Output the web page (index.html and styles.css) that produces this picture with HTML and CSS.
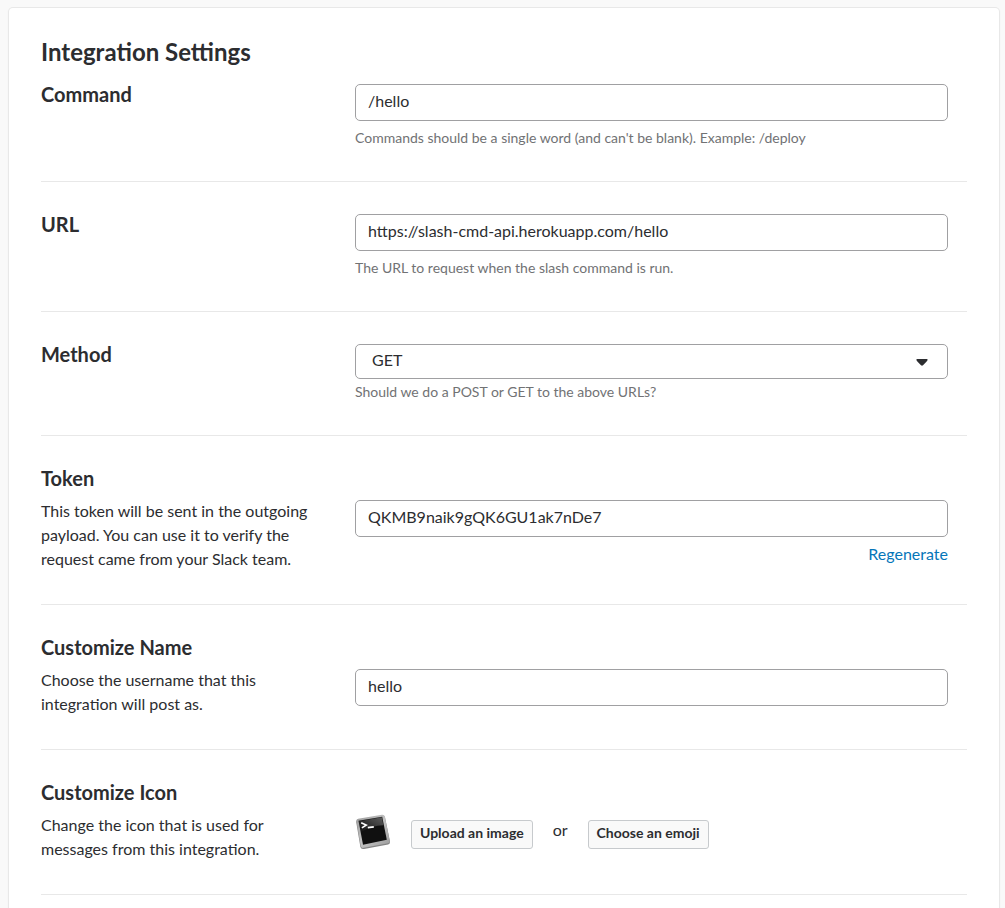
FILE: index.html
```html
<!DOCTYPE html>
<html lang="en">
<head>
<meta charset="utf-8">
<meta name="viewport" content="width=device-width, initial-scale=1">
<title>Integration Settings</title>
<link rel="stylesheet" href="styles.css">
</head>
<body>
<main class="card">
  <h1 class="card-title">Integration Settings</h1>
  <form class="settings">
    <section class="row">
      <div class="info"><h2 class="label"><label for="command">Command</label></h2></div>
      <div class="field">
        <input class="text-input" id="command" type="text" value="/hello">
        <p class="hint">Commands should be a single word (and can't be blank). Example: /deploy</p>
      </div>
    </section>
    <section class="row">
      <div class="info"><h2 class="label"><label for="url">URL</label></h2></div>
      <div class="field">
        <input class="text-input" id="url" type="text" value="https://slash-cmd-api.herokuapp.com/hello">
        <p class="hint">The URL to request when the slash command is run.</p>
      </div>
    </section>
    <section class="row">
      <div class="info"><h2 class="label"><label for="method">Method</label></h2></div>
      <div class="field">
        <div class="select-wrap">
          <select class="select" id="method">
            <option selected>GET</option>
            <option>POST</option>
          </select>
          <svg class="caret" viewBox="0 0 12 8" aria-hidden="true"><path d="M1.200 1h9.600q1 0 .8 1-.2.800-1.200 1.700L7 7.200q-1 .9-2 0L1.600 3.700Q.6 2.800.4 2 .2 1 1.200 1z"/></svg>
        </div>
        <p class="hint hint-close">Should we do a POST or GET to the above URLs?</p>
      </div>
    </section>
    <section class="row">
      <div class="info">
        <h2 class="label"><label for="token">Token</label></h2>
        <p class="description">This token will be sent in the outgoing payload. You can use it to verify the request came from your Slack team.</p>
      </div>
      <div class="field field-lowered">
        <input class="text-input" id="token" type="text" value="QKMB9naik9gQK6GU1ak7nDe7" readonly>
        <a class="regenerate" href="#token">Regenerate</a>
      </div>
    </section>
    <section class="row">
      <div class="info">
        <h2 class="label"><label for="name">Customize Name</label></h2>
        <p class="description">Choose the username that this integration will post as.</p>
      </div>
      <div class="field field-lowered">
        <input class="text-input" id="name" type="text" value="hello">
      </div>
    </section>
    <section class="row">
      <div class="info">
        <h2 class="label">Customize Icon</h2>
        <p class="description">Change the icon that is used for messages from this integration.</p>
      </div>
      <div class="field field-lowered">
        <div class="icon-picker">
          <svg class="app-icon" viewBox="0 0 36 36" role="img" aria-label="Terminal icon">
            <defs>
              <linearGradient id="frame" x1="0" y1="0" x2="1" y2="1">
                <stop offset="0" stop-color="#9a9a9a"/><stop offset=".5" stop-color="#c4c4c4"/><stop offset="1" stop-color="#9a9a9a"/>
              </linearGradient>
              <linearGradient id="glare" x1="0" y1="1" x2="1" y2="0">
                <stop offset="0" stop-color="#fff" stop-opacity="0"/><stop offset="1" stop-color="#fff" stop-opacity=".32"/>
              </linearGradient>
            </defs>
            <path d="M3 5.500 27 1.500q2.500-.4 3 1.800L35 27.500q.4 2.300-1.800 3L9 35q-3 .6-3.600-2L1.200 8q-.3-2 1.800-2.500z" fill="#858585"/>
            <path d="M3.200 4.800 27 .8q2.300-.3 2.800 1.700l4.900 24.200q.4 2-1.700 2.600L8.800 33.800q-2.500.5-3-1.600L1.500 7.200q-.3-2 1.700-2.400z" fill="url(#frame)"/>
            <path d="M3.500 6.800 27.200 2.800l4.600 23L8 30.800z" fill="#101010"/>
            <path d="M4 7.200 26.800 3.300l1.500 8Q17 11.500 6 18z" fill="url(#glare)"/>
            <path d="m6.200 8.800 5 2.300-4.300 2.800M12.800 13.700l6-.9" fill="none" stroke="#fff" stroke-width="1.700"/>
          </svg>
          <div class="icon-actions">
            <button class="button" type="button">Upload an image</button>
            <span class="or">or</span>
            <button class="button" type="button">Choose an emoji</button>
          </div>
        </div>
      </div>
    </section>
  </form>
</main>
</body>
</html>
```
FILE: styles.css
```css
* {
  box-sizing: border-box;
}

body {
  display: flex;
  flex-direction: column;
  min-height: 100vh;
  margin: 0;
  padding: 8px 6px 0 9px;
  background: #f9f9f9;
  color: #2c2d30;
  font-family: Lato, "Liberation Sans", sans-serif;
  font-size: 16px;
  line-height: 24px;
}

h1, h2, p {
  margin: 0;
}

.card {
  flex: 1;
  padding: 32px 32px 0;
  background: #fff;
  border-radius: 4px 4px 0 0;
  box-shadow: 0 0 0 1px #e8e8e8, 0 1px 3px rgba(0, 0, 0, 0.08);
}

.card-title {
  margin-bottom: 20px;
  font-size: 24px;
  line-height: 24px;
}

.row {
  display: grid;
  grid-template-columns: minmax(200px, 282px) 1fr;
  column-gap: 32px;
  padding: 32px 19px 32px 0;
  border-bottom: 1px solid #e8e8e8;
}

.row:first-child {
  padding-top: 0;
}

.label {
  font-size: 20px;
  line-height: 20px;
}

.info {
  padding-bottom: 1px;
}

.description {
  margin-top: 11px;
}

.field {
  min-width: 0;
}

.field-lowered {
  padding-top: 32px;
}

.text-input,
.select {
  display: block;
  width: 100%;
  border: 1px solid #a0a0a2;
  border-radius: 5px;
  background: #fff;
  color: inherit;
  font: inherit;
}

.text-input {
  height: 37px;
  padding: 3px 12px 7px;
}

.select-wrap {
  position: relative;
}

.select {
  height: 35px;
  padding: 3px 40px 6px 16px;
  appearance: none;
}

.caret {
  position: absolute;
  top: 14px;
  right: 20px;
  width: 12px;
  height: 8px;
  fill: #2c2d30;
  pointer-events: none;
}

.hint {
  margin: 7px 0 1px;
  color: #717274;
  font-size: 14px;
  line-height: 20px;
}

.hint-close {
  margin-top: 3px;
}

.regenerate {
  display: block;
  width: fit-content;
  margin: 5px 0 0 auto;
  color: #0576b9;
  text-decoration: none;
}

.icon-picker {
  display: flex;
  align-items: flex-start;
  gap: 20px;
}

.app-icon {
  width: 36px;
  height: 36px;
}

.icon-actions {
  display: flex;
  align-items: center;
  gap: 20px;
  padding-top: 4px;
}

.button {
  height: 29px;
  padding: 0 8px 3px;
  border: 1px solid #c7cacd;
  border-radius: 3px;
  background: #f9f9f9;
  color: inherit;
  font: bold 14px/20px Lato, "Liberation Sans", sans-serif;
}

.or {
  padding-bottom: 8px;
}
```
